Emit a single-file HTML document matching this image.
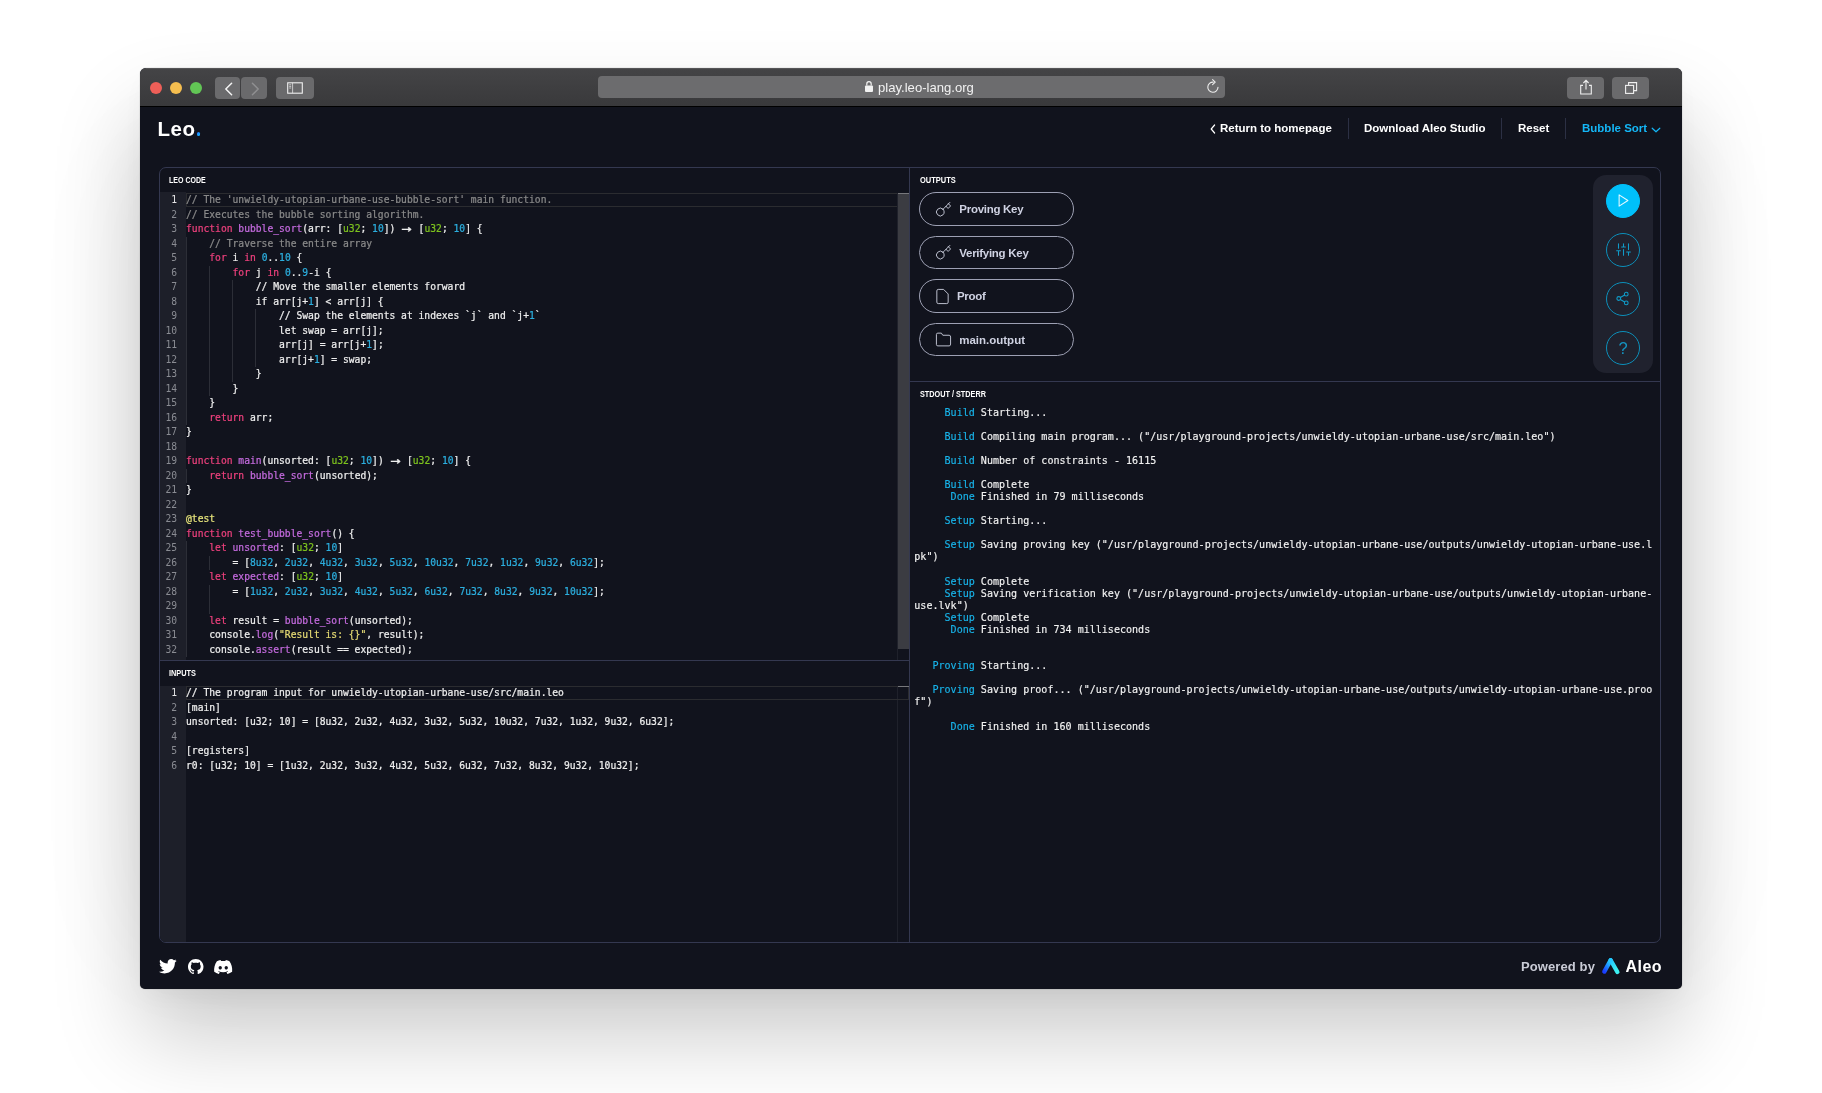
<!DOCTYPE html>
<html lang="en">
<head>
<meta charset="utf-8">
<title>Leo Playground</title>
<style>
*{box-sizing:border-box;margin:0;padding:0}
html,body{width:1822px;height:1093px;overflow:hidden;background:#fff}
body{position:relative;font-family:"Liberation Sans",sans-serif;color:#fff}
.abs{position:absolute}
#win{will-change:transform;position:absolute;left:140px;top:68px;width:1542px;height:921px;border-radius:6px 6px 5px 5px;background:#11131d;
 box-shadow:0 0 1px rgba(0,0,0,.55),0 48px 88px rgba(0,0,0,.20),0 8px 30px rgba(0,0,0,.035);overflow:hidden}
#tb{position:absolute;left:0;top:0;width:1542px;height:39px;background:linear-gradient(#444446,#39393b);border-bottom:1px solid #000;border-top:1px solid #555557;border-radius:6px 6px 0 0}
.tl{position:absolute;top:13px;width:12px;height:12px;border-radius:50%}
.btn{position:absolute;top:8px;height:22px;border-radius:4px;background:#69696b}
#url{position:absolute;left:458px;top:7px;width:627px;height:22px;border-radius:4px;background:#6c6c6e;color:#f2f2f2;font-size:13.1px;line-height:22px;text-align:left}
svg{position:absolute;overflow:visible}
.nav{position:absolute;top:53.2px;height:15px;line-height:15px;font-size:11.5px;font-weight:bold;color:#fff;white-space:nowrap}
.sep{position:absolute;top:50px;width:1px;height:21px;background:#2c3044}
#panel{position:absolute;left:19px;top:99px;width:1502px;height:776px;border:1px solid #343850;border-radius:7px;overflow:hidden}
#pin{position:absolute;left:-1px;top:0;width:1503px;height:776px}
.lab{position:absolute;font-size:8.2px;font-weight:bold;color:#fff;line-height:10px;white-space:nowrap;transform-origin:0 50%}
.ed{position:absolute;left:1px;font-family:"DejaVu Sans Mono","Liberation Mono",monospace;font-size:9.66px;line-height:14.516px;color:#eeeeee}
.ln{height:14.516px;position:relative}
.no{position:absolute;left:0;width:17.2px;text-align:right;color:#8a8c93}
.no.on{color:#e4e4e6}
.tx{position:absolute;left:26px;white-space:pre;-webkit-text-stroke:0.22px}
.k{color:#ee407d}.f{color:#c56bdf}.t{color:#7dc21e}.n{color:#2cafdf}.c{color:#8a8a8a}.s{color:#e6db74}.a{color:#e8e67c}
.ar{display:inline-block;width:11.6px;text-align:center;transform:scale(1.75,1.35);transform-origin:50% 58%}
.gut{position:absolute;left:1px;width:25.5px;background:#1d1f29}
.g{position:absolute;width:1px;background:#2c2e37}
.cl{position:absolute;border:1px solid #2b2c30;height:14px}
.hl{position:absolute;height:1px;background:#343850}
.ob{position:absolute;left:760.3px;width:155px;height:33.5px;border:1px solid #9da0b3;border-radius:17px;font-size:11.5px;font-weight:bold;color:#cfd2e2;line-height:31.5px;white-space:nowrap}
.ob span{position:absolute;top:0.9px}
.ob svg{fill:none;stroke:#c4c7d6;stroke-width:1.35;stroke-linecap:round;stroke-linejoin:round}
#out{position:absolute;left:755.3px;top:238.5px;-webkit-text-stroke:0.15px;font-family:"DejaVu Sans Mono","Liberation Mono",monospace;font-size:10.06px;line-height:12.08px;color:#f2f2f2}
.ol{height:12.08px;white-space:pre}
.tg{color:#18b4ea}
#tools{position:absolute;left:1434px;top:7px;width:60px;height:197.5px;border-radius:13px;background:#20222e}
.circ{position:absolute;left:13px;width:34px;height:34px;border-radius:50%;border:1px solid #0c8fba}
.circ svg{fill:none;stroke:#109bc8;stroke-width:1.7;stroke-linecap:round;stroke-linejoin:round}
</style>
</head>
<body>
<div style="position:absolute;left:140px;top:160px;width:1542px;height:780px;box-shadow:0 0 110px rgba(0,0,0,.065)"></div>
<div id="win">
  <!-- ===== Safari title bar ===== -->
  <div id="tb">
    <div class="tl" style="left:10px;background:#ee5f58"></div>
    <div class="tl" style="left:30px;background:#f5be4f"></div>
    <div class="tl" style="left:50px;background:#62c655"></div>
    <div class="btn" style="left:75px;width:25px;background:#6b6b6d"></div>
    <div class="btn" style="left:101.4px;width:25.2px;background:#6a6a6c"></div>
    <svg style="left:75.6px;top:8.5px" width="52" height="22" viewBox="0 0 52 22"><path d="M15.6 5.2 L9.8 11 L15.6 16.8" fill="none" stroke="#f4f4f4" stroke-width="1.5" stroke-linecap="round" stroke-linejoin="round"/><path d="M36.4 5.2 L42.2 11 L36.4 16.8" fill="none" stroke="#8f8f91" stroke-width="1.5" stroke-linecap="round" stroke-linejoin="round"/></svg>
    <div class="btn" style="left:136px;width:38px;background:#6a6a6c"></div>
    <svg style="left:136px;top:8px" width="38" height="22" viewBox="0 0 38 22"><rect x="11.7" y="5.8" width="14.6" height="10.4" fill="none" stroke="#f0f0f0" stroke-width="1.1"/><path d="M16.6 5.8V16.2M13.2 7.800h2M13.200 9.400h2M13.200 11h2" stroke="#f0f0f0" stroke-width="0.700" fill="none"/></svg>
    <div id="url"><span style="position:absolute;left:280px;top:0.7px">play.leo-lang.org</span></div>
    <svg style="left:724px;top:11px" width="10" height="13" viewBox="0 0 10 13"><rect x="1" y="5.4" width="8" height="6.6" rx="1" fill="#f2f2f2"/><path d="M2.8 5.6V3.9a2.2 2.2 0 0 1 4.4 0V5.6" fill="none" stroke="#f2f2f2" stroke-width="1.2"/></svg>
    <svg style="left:1066px;top:10px" width="14" height="15" viewBox="0 0 14 15"><path d="M7.2 3.1 A5.1 5.1 0 1 0 12 8.3" fill="none" stroke="#ededed" stroke-width="1.1" stroke-linecap="round"/><path d="M6.6 0.6 L9.2 3.1 L6.6 5.6" fill="none" stroke="#ededed" stroke-width="1.1" stroke-linecap="round" stroke-linejoin="round"/></svg>
    <div class="btn" style="left:1427px;width:37px;background:#6a6a6c"></div>
    <svg style="left:1426.5px;top:8px" width="38" height="22" viewBox="0 0 38 22"><path d="M16 8.4h-2.3v8.6h10.6V8.4H22" fill="none" stroke="#f0f0f0" stroke-width="1.1"/><path d="M19 12.6V3.6M16.4 6 L19 3.4 L21.6 6" fill="none" stroke="#f0f0f0" stroke-width="1.1"/></svg>
    <div class="btn" style="left:1471.5px;width:37.5px;background:#6a6a6c"></div>
    <svg style="left:1471.5px;top:8px" width="38" height="22" viewBox="0 0 38 22"><rect x="13.6" y="8.4" width="8" height="8" fill="none" stroke="#f0f0f0" stroke-width="1.1"/><path d="M16.6 8.2V5.6h8v8h-2.8" fill="none" stroke="#f0f0f0" stroke-width="1.1"/></svg>
  </div>

  <!-- ===== page header ===== -->
  <div class="abs" id="logo" style="left:17.5px;top:48.5px;font-size:20.5px;font-weight:bold;line-height:24px;letter-spacing:0.6px;white-space:nowrap">Leo<span style="position:absolute;left:39.2px;top:15.4px;width:3.8px;height:3.8px;border-radius:50%;background:linear-gradient(135deg,#1b6cff,#19c2ff);color:transparent;font-size:4px;line-height:4px;overflow:hidden">.</span></div>

  <svg style="left:1070px;top:56px" width="6" height="10" viewBox="0 0 6 10"><path d="M4.6 1 L1.2 5 L4.6 9" fill="none" stroke="#fff" stroke-width="1.2" stroke-linecap="round" stroke-linejoin="round"/></svg>
  <div class="nav" id="n1" style="left:1080px">Return to homepage</div>
  <div class="sep" style="left:1208px"></div>
  <div class="nav" id="n2" style="left:1224px">Download Aleo Studio</div>
  <div class="sep" style="left:1361px"></div>
  <div class="nav" id="n3" style="left:1378px">Reset</div>
  <div class="sep" style="left:1425px"></div>
  <div class="nav" id="n4" style="left:1442px;color:#14b6f6">Bubble Sort</div>
  <svg style="left:1511px;top:58.5px" width="10" height="6" viewBox="0 0 10 6"><path d="M1.2 1.2 L5 4.8 L8.8 1.2" fill="none" stroke="#14b6f6" stroke-width="1.2" stroke-linecap="round" stroke-linejoin="round"/></svg>

  <!-- ===== main panel ===== -->
  <div id="panel"><div id="pin">
    <!-- left: code -->
    <div class="lab" id="l1" style="left:10.2px;top:7.9px;transform:scaleX(0.859)">LEO CODE</div>
    <div class="gut" style="top:24px;height:468px"></div>
    <div class="cl" style="left:26.5px;top:24.6px;width:723px"></div>
    <!-- indent guides -->
    <div class="g" style="left:26.6px;top:68.5px;height:188.7px"></div>
    <div class="g" style="left:49.8px;top:97.5px;height:130.7px"></div>
    <div class="g" style="left:73px;top:112px;height:101.7px"></div>
    <div class="g" style="left:96.2px;top:141px;height:58px"></div>
    <div class="g" style="left:26.6px;top:300.8px;height:14.5px"></div>
    <div class="g" style="left:26.6px;top:373.4px;height:116px"></div>
    <div class="g" style="left:49.8px;top:387.9px;height:14.5px"></div>
    <div class="g" style="left:49.8px;top:416.9px;height:29px"></div>
    <div class="ed" id="code" style="top:25px;height:466.6px;overflow:hidden;width:738px">
<div class="ln"><span class="no on">1</span><span class="tx"><span class="c">// The 'unwieldy-utopian-urbane-use-bubble-sort' main function.</span></span></div>
<div class="ln"><span class="no">2</span><span class="tx"><span class="c">// Executes the bubble sorting algorithm.</span></span></div>
<div class="ln"><span class="no">3</span><span class="tx"><span class="k">function</span> <span class="f">bubble_sort</span>(arr: [<span class="t">u32</span>; <span class="n">10</span>]) <span class="ar">→</span> [<span class="t">u32</span>; <span class="n">10</span>] {</span></div>
<div class="ln"><span class="no">4</span><span class="tx"><span class="c">    // Traverse the entire array</span></span></div>
<div class="ln"><span class="no">5</span><span class="tx">    <span class="k">for</span> i <span class="k">in</span> <span class="n">0</span>..<span class="n">10</span> {</span></div>
<div class="ln"><span class="no">6</span><span class="tx">        <span class="k">for</span> j <span class="k">in</span> <span class="n">0</span>..<span class="n">9</span>-i {</span></div>
<div class="ln"><span class="no">7</span><span class="tx">            // Move the smaller elements forward</span></div>
<div class="ln"><span class="no">8</span><span class="tx">            if arr[j+<span class="n">1</span>] &lt; arr[j] {</span></div>
<div class="ln"><span class="no">9</span><span class="tx">                // Swap the elements at indexes `j` and `j+<span class="n">1</span>`</span></div>
<div class="ln"><span class="no">10</span><span class="tx">                let swap = arr[j];</span></div>
<div class="ln"><span class="no">11</span><span class="tx">                arr[j] = arr[j+<span class="n">1</span>];</span></div>
<div class="ln"><span class="no">12</span><span class="tx">                arr[j+<span class="n">1</span>] = swap;</span></div>
<div class="ln"><span class="no">13</span><span class="tx">            }</span></div>
<div class="ln"><span class="no">14</span><span class="tx">        }</span></div>
<div class="ln"><span class="no">15</span><span class="tx">    }</span></div>
<div class="ln"><span class="no">16</span><span class="tx">    <span class="k">return</span> arr;</span></div>
<div class="ln"><span class="no">17</span><span class="tx">}</span></div>
<div class="ln"><span class="no">18</span><span class="tx"></span></div>
<div class="ln"><span class="no">19</span><span class="tx"><span class="k">function</span> <span class="f">main</span>(unsorted: [<span class="t">u32</span>; <span class="n">10</span>]) <span class="ar">→</span> [<span class="t">u32</span>; <span class="n">10</span>] {</span></div>
<div class="ln"><span class="no">20</span><span class="tx">    <span class="k">return</span> <span class="f">bubble_sort</span>(unsorted);</span></div>
<div class="ln"><span class="no">21</span><span class="tx">}</span></div>
<div class="ln"><span class="no">22</span><span class="tx"></span></div>
<div class="ln"><span class="no">23</span><span class="tx"><span class="a">@test</span></span></div>
<div class="ln"><span class="no">24</span><span class="tx"><span class="k">function</span> <span class="f">test_bubble_sort</span>() {</span></div>
<div class="ln"><span class="no">25</span><span class="tx">    <span class="k">let</span> <span class="f">unsorted</span>: [<span class="t">u32</span>; <span class="n">10</span>]</span></div>
<div class="ln"><span class="no">26</span><span class="tx">        = [<span class="n">8u32</span>, <span class="n">2u32</span>, <span class="n">4u32</span>, <span class="n">3u32</span>, <span class="n">5u32</span>, <span class="n">10u32</span>, <span class="n">7u32</span>, <span class="n">1u32</span>, <span class="n">9u32</span>, <span class="n">6u32</span>];</span></div>
<div class="ln"><span class="no">27</span><span class="tx">    <span class="k">let</span> <span class="f">expected</span>: [<span class="t">u32</span>; <span class="n">10</span>]</span></div>
<div class="ln"><span class="no">28</span><span class="tx">        = [<span class="n">1u32</span>, <span class="n">2u32</span>, <span class="n">3u32</span>, <span class="n">4u32</span>, <span class="n">5u32</span>, <span class="n">6u32</span>, <span class="n">7u32</span>, <span class="n">8u32</span>, <span class="n">9u32</span>, <span class="n">10u32</span>];</span></div>
<div class="ln"><span class="no">29</span><span class="tx"></span></div>
<div class="ln"><span class="no">30</span><span class="tx">    <span class="k">let</span> result = <span class="f">bubble_sort</span>(unsorted);</span></div>
<div class="ln"><span class="no">31</span><span class="tx">    console.<span class="f">log</span>(<span class="s">"Result is: {}"</span>, result);</span></div>
<div class="ln"><span class="no">32</span><span class="tx">    console.<span class="f">assert</span>(result == expected);</span></div>
<div class="ln"><span class="no">33</span><span class="tx">}</span></div>
    </div>
    <!-- scrollbar -->
    <div class="abs" style="left:738px;top:25px;width:1px;height:467px;background:#1f212b"></div>
    <div class="abs" style="left:738px;top:517.5px;width:1px;height:259px;background:#1f212b"></div>
    <div class="abs" style="left:739px;top:24.5px;width:11px;height:456px;background:#3b3c42"></div>
    <div class="abs" style="left:739px;top:24.5px;width:11px;height:1.6px;background:#77787c"></div>
    <div class="hl" style="left:0;top:492px;width:750px"></div>

    <!-- left: inputs -->
    <div class="lab" id="l2" style="left:10.2px;top:500.8px;transform:scaleX(0.897)">INPUTS</div>
    <div class="gut" style="top:518px;height:258px"></div>
    <div class="cl" style="left:26.5px;top:517.6px;width:723px"></div>
    <div class="abs" style="left:739px;top:517.6px;width:11px;height:1.6px;background:#77787c"></div>
    <div class="ed" id="inp" style="top:518px">
<div class="ln"><span class="no on">1</span><span class="tx">// The program input for unwieldy-utopian-urbane-use/src/main.leo</span></div>
<div class="ln"><span class="no">2</span><span class="tx">[main]</span></div>
<div class="ln"><span class="no">3</span><span class="tx">unsorted: [u32; 10] = [8u32, 2u32, 4u32, 3u32, 5u32, 10u32, 7u32, 1u32, 9u32, 6u32];</span></div>
<div class="ln"><span class="no">4</span><span class="tx"></span></div>
<div class="ln"><span class="no">5</span><span class="tx">[registers]</span></div>
<div class="ln"><span class="no">6</span><span class="tx">r0: [u32; 10] = [1u32, 2u32, 3u32, 4u32, 5u32, 6u32, 7u32, 8u32, 9u32, 10u32];</span></div>
    </div>

    <!-- vertical divider -->
    <div class="abs" style="left:750px;top:0;width:1px;height:777px;background:#343850"></div>

    <!-- right: outputs -->
    <div class="lab" id="l3" style="left:760.6px;top:8px;transform:scaleX(0.914)">OUTPUTS</div>
    <div class="ob" style="top:24.3px"><svg style="left:15px;top:7.4px" width="17" height="17" viewBox="0 0 24 24"><path d="M21 2l-2 2m-7.610 7.610a5.500 5.500 0 1 1-7.778 7.778 5.500 5.500 0 0 1 7.777-7.777zm0 0L15.500 7.500m0 0l3 3L22 7l-3-3m-3.500 3.500L19 4"/></svg><span id="b1" style="left:39px;letter-spacing:-0.28px">Proving Key</span></div>
    <div class="ob" style="top:67.9px"><svg style="left:15px;top:7.4px" width="17" height="17" viewBox="0 0 24 24"><path d="M21 2l-2 2m-7.610 7.610a5.500 5.500 0 1 1-7.778 7.778 5.500 5.500 0 0 1 7.777-7.777zm0 0L15.500 7.500m0 0l3 3L22 7l-3-3m-3.500 3.500L19 4"/></svg><span id="b2" style="left:39px;letter-spacing:-0.28px">Verifying Key</span></div>
    <div class="ob" style="top:111.4px"><svg style="left:13.7px;top:7.2px" width="17" height="17" viewBox="0 0 24 24"><path d="M13 2H6a2 2 0 0 0-2 2v16a2 2 0 0 0 2 2h12a2 2 0 0 0 2-2V9z"/></svg><span id="b3" style="left:36.7px;letter-spacing:-0.28px">Proof</span></div>
    <div class="ob" style="top:154.9px"><svg style="left:15.1px;top:7.3px" width="17" height="17" viewBox="0 0 24 24"><path d="M22 19a2 2 0 0 1-2 2H4a2 2 0 0 1-2-2V5a2 2 0 0 1 2-2h5l2 3h9a2 2 0 0 1 2 2z"/></svg><span id="b4" style="left:38.9px;letter-spacing:0px">main.output</span></div>

    <div id="tools">
      <div class="circ" style="top:8.5px;background:#00c0fa;border-color:#00c0fa"><svg style="left:8.5px;top:8.5px" width="15" height="15" viewBox="0 0 24 24"><polygon points="5 3 19 12 5 21 5 3" style="stroke:#e6f9ff"/></svg></div>
      <div class="circ" style="top:57.5px"><svg style="left:8.5px;top:8.5px" width="15" height="15" viewBox="0 0 24 24"><path d="M4 21v-7M4 10V3M12 21v-9M12 8V3M20 21v-5M20 12V3M1 14h6M9 8h6M17 16h6"/></svg></div>
      <div class="circ" style="top:106.5px"><svg style="left:7.7px;top:8.5px" width="15" height="15" viewBox="0 0 24 24"><circle cx="18" cy="5" r="3"/><circle cx="6" cy="12" r="3"/><circle cx="18" cy="19" r="3"/><path d="M8.590 13.510l6.830 3.980M15.410 6.510l-6.820 3.980"/></svg></div>
      <div class="circ" style="top:155.5px"><span id="q" style="position:absolute;left:0;top:0.5px;width:32px;text-align:center;line-height:32px;font-size:16.5px;color:#1593c0">?</span></div>
    </div>

    <div class="hl" style="left:751px;top:213.4px;width:753px"></div>
    <div class="lab" id="l4" style="left:760.6px;top:221.6px;transform:scaleX(0.889)">STDOUT / STDERR</div>
    <div id="out">
<div class="ol">     <span class="tg">Build</span> Starting...</div>
<div class="ol"> </div>
<div class="ol">     <span class="tg">Build</span> Compiling main program... ("/usr/playground-projects/unwieldy-utopian-urbane-use/src/main.leo")</div>
<div class="ol"> </div>
<div class="ol">     <span class="tg">Build</span> Number of constraints - 16115</div>
<div class="ol"> </div>
<div class="ol">     <span class="tg">Build</span> Complete</div>
<div class="ol">      <span class="tg">Done</span> Finished in 79 milliseconds</div>
<div class="ol"> </div>
<div class="ol">     <span class="tg">Setup</span> Starting...</div>
<div class="ol"> </div>
<div class="ol">     <span class="tg">Setup</span> Saving proving key ("/usr/playground-projects/unwieldy-utopian-urbane-use/outputs/unwieldy-utopian-urbane-use.l</div>
<div class="ol">pk")</div>
<div class="ol"> </div>
<div class="ol">     <span class="tg">Setup</span> Complete</div>
<div class="ol">     <span class="tg">Setup</span> Saving verification key ("/usr/playground-projects/unwieldy-utopian-urbane-use/outputs/unwieldy-utopian-urbane-</div>
<div class="ol">use.lvk")</div>
<div class="ol">     <span class="tg">Setup</span> Complete</div>
<div class="ol">      <span class="tg">Done</span> Finished in 734 milliseconds</div>
<div class="ol"> </div>
<div class="ol"> </div>
<div class="ol">   <span class="tg">Proving</span> Starting...</div>
<div class="ol"> </div>
<div class="ol">   <span class="tg">Proving</span> Saving proof... ("/usr/playground-projects/unwieldy-utopian-urbane-use/outputs/unwieldy-utopian-urbane-use.proo</div>
<div class="ol">f")</div>
<div class="ol"> </div>
<div class="ol">      <span class="tg">Done</span> Finished in 160 milliseconds</div>
    </div>
  </div></div>

  <!-- ===== footer ===== -->
  <svg style="left:18.5px;top:891px" width="18" height="15" viewBox="0 0 24 20"><path fill="#fff" d="M23.6 2.4c-.9.4-1.8.6-2.8.8 1-.6 1.8-1.6 2.1-2.7-.9.6-2 1-3.1 1.2A4.8 4.8 0 0 0 16.300 0c-2.700 0-4.800 2.200-4.800 4.800 0 .4 0 .8.100 1.100C7.600 5.700 4 3.800 1.700.9 1.200 1.600 1 2.400 1 3.300c0 1.700.9 3.200 2.200 4-.8 0-1.500-.2-2.200-.6v.1c0 2.300 1.700 4.300 3.900 4.700-.4.100-.8.200-1.300.2-.3 0-.6 0-.9-.1.600 1.900 2.400 3.300 4.500 3.400A9.700 9.700 0 0 1 0 17c2.100 1.400 4.700 2.200 7.400 2.200 8.900 0 13.800-7.400 13.800-13.800v-.6c.9-.7 1.800-1.500 2.400-2.400z"/></svg>
  <svg style="left:47.5px;top:890.5px" width="15.5" height="15.5" viewBox="0 0 16 16"><path fill="#fff" d="M8 0C3.580 0 0 3.580 0 8c0 3.540 2.290 6.530 5.470 7.590.4.070.55-.17.55-.38 0-.19-.01-.82-.01-1.490-2.010.37-2.530-.49-2.690-.94-.09-.23-.48-.94-.82-1.130-.28-.15-.68-.52-.01-.53.630-.01 1.080.58 1.230.82.720 1.210 1.870.87 2.330.66.070-.52.280-.87.510-1.070-1.780-.2-3.640-.89-3.640-3.950 0-.87.310-1.590.82-2.150-.08-.2-.36-1.020.08-2.120 0 0 .67-.21 2.200.82.640-.18 1.320-.27 2-.27.680 0 1.360.09 2 .27 1.530-1.040 2.200-.82 2.200-.82.440 1.100.16 1.920.08 2.120.51.560.82 1.270.82 2.150 0 3.070-1.870 3.750-3.650 3.950.29.250.54.730.54 1.480 0 1.070-.01 1.930-.01 2.200 0 .21.150.46.550.38A8.013 8.013 0 0 0 16 8c0-4.420-3.580-8-8-8z"/></svg>
  <svg style="left:73.5px;top:891.5px" width="18.5" height="14" viewBox="0 0 71 55"><path fill="#fff" d="M60.100 4.900A58.500 58.500 0 0 0 45.500.400a.200.200 0 0 0-.200.100 40.800 40.800 0 0 0-1.800 3.700 54 54 0 0 0-16.200 0A37.600 37.600 0 0 0 25.400.500a.200.200 0 0 0-.200-.100A58.400 58.400 0 0 0 10.600 4.900a.200.200 0 0 0-.1.100C1.200 18.700-1.300 32.200-.1 45.500a.200.200 0 0 0 .1.200 58.800 58.800 0 0 0 17.700 9 .200.200 0 0 0 .300-.100 42 42 0 0 0 3.600-5.900.200.200 0 0 0-.1-.3 38.700 38.700 0 0 1-5.500-2.600.200.200 0 0 1 0-.400c.4-.3.700-.600 1.100-.900a.200.200 0 0 1 .200 0c11.600 5.300 24.100 5.300 35.600 0a.200.200 0 0 1 .200 0c.4.300.700.600 1.100.900a.200.200 0 0 1 0 .400 36.300 36.300 0 0 1-5.500 2.600.200.200 0 0 0-.1.300 47.200 47.200 0 0 0 3.600 5.900.200.200 0 0 0 .300.100A58.600 58.600 0 0 0 70.300 45.700a.200.200 0 0 0 .1-.2c1.500-15.300-2.500-28.700-10.500-40.500a.200.200 0 0 0-.1-.1zM23.700 37.300c-3.500 0-6.400-3.200-6.400-7.100s2.800-7.100 6.400-7.100c3.600 0 6.500 3.200 6.400 7.100 0 3.900-2.800 7.100-6.400 7.100zm23.600 0c-3.500 0-6.400-3.200-6.400-7.100s2.800-7.100 6.400-7.100c3.600 0 6.500 3.200 6.400 7.100 0 3.900-2.800 7.100-6.400 7.100z"/></svg>

  <div class="abs" id="pw" style="left:1381px;top:890.5px;font-size:13px;font-weight:bold;line-height:16px;color:#c9cbd6;white-space:nowrap;letter-spacing:0.1px">Powered by</div>
  <svg style="left:1461px;top:889px" width="20" height="18" viewBox="0 0 20 18"><defs><linearGradient id="ag1" x1="0" y1="1" x2="0.6" y2="0"><stop offset="0" stop-color="#1a3cff"/><stop offset="1" stop-color="#22c8ff"/></linearGradient><linearGradient id="ag2" x1="0" y1="0" x2="0.6" y2="1"><stop offset="0" stop-color="#22c8ff"/><stop offset="1" stop-color="#3cf0f0"/></linearGradient></defs><path d="M9.700 3.200 L16.400 15" fill="none" stroke="url(#ag2)" stroke-width="4.300" stroke-linecap="round"/><path d="M3.300 14.600 L9.600 3.200" fill="none" stroke="url(#ag1)" stroke-width="4.300" stroke-linecap="round"/></svg>
  <div class="abs" id="aleo" style="left:1485.500px;top:889px;font-size:16px;font-weight:bold;line-height:20px;color:#fff;white-space:nowrap;letter-spacing:0.45px">Aleo</div>
</div>
</body>
</html>
